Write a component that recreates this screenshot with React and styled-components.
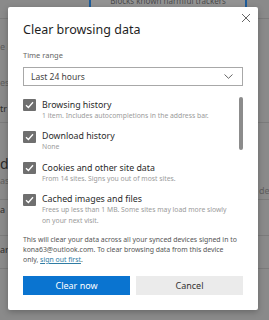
import React from "react";
import styled, { createGlobalStyle } from "styled-components";

const Global = createGlobalStyle`
  html, body { margin: 0; padding: 0; background: #8a8a8a; overflow: hidden; }
  * { box-sizing: border-box; }
`;

const FONT = `"Noto Sans", "Open Sans", sans-serif`;

const Page = styled.div`
  position: relative;
  width: 269px;
  height: 320px;
  overflow: hidden;
  background: #8a8a8a;
  font-family: ${FONT};
`;

const Backdrop = styled.div`
  display: flex;
  flex-direction: column;
`;

const TopBand = styled.div`
  height: 19px;
  border-bottom: 1px solid #7b7b7b;
  padding-left: 89px;
`;

const TrackerCard = styled.div`
  width: 158px;
  height: 7px;
  border-left: 2px solid #1d5c9a;
  border-right: 2px solid #1d5c9a;
  background: #939393;
  overflow: hidden;
  font-size: 8px;
  line-height: 8px;
  color: #4a4a4a;
  text-align: center;
  & > span { display: block; margin-top: -3px; }
`;

const BgSection = styled.div`
  height: ${(p) => p.$h}px;
  border-bottom: 1px solid #7b7b7b;
  display: flex;
  flex-direction: column;
`;

const BgText = styled.div`
  white-space: nowrap;
  font-size: ${(p) => (p.$big ? 14 : 9)}px;
  line-height: ${(p) => (p.$big ? 14 : 10)}px;
  color: ${(p) => (p.$muted ? "#5e5e5e" : "#2c2c2c")};
  margin-top: ${(p) => p.$mt || 0}px;
  margin-left: ${(p) => p.$ml || 0}px;
`;

const Dialog = styled.div`
  position: absolute;
  left: 8px;
  top: 7px;
  width: 250px;
  height: 303px;
  background: #ffffff;
  border-radius: 2px;
  box-shadow: 0 2px 6px rgba(0, 0, 0, 0.25);
  padding: 14px 15px 15px;
  display: flex;
  flex-direction: column;
`;

const Title = styled.h1`
  margin: 0;
  font-size: 12.5px;
  line-height: 17px;
  font-weight: 400;
  color: #1f1f1f;
`;

const CloseButton = styled.button`
  position: absolute;
  top: 6px;
  right: 7px;
  width: 10px;
  height: 10px;
  padding: 0;
  border: 0;
  background: transparent;
  display: flex;
  align-items: center;
  justify-content: center;
`;

const Label = styled.div`
  margin-top: 12px;
  font-size: 7.5px;
  line-height: 10px;
  color: #666;
`;

const Select = styled.div`
  margin-top: 7px;
  height: 19px;
  border: 1px solid #a8a8a8;
  display: flex;
  align-items: center;
  justify-content: space-between;
  padding: 0 9px 0 7px;
  font-size: 8.5px;
  color: #444;
`;

const List = styled.div`
  position: relative;
  margin-top: 10px;
  height: 132px;
  padding-top: 3px;
  overflow: hidden;
`;

const Thumb = styled.div`
  position: absolute;
  right: 0;
  top: 1px;
  width: 4px;
  height: 53px;
  border-radius: 2px;
  background: #8c8c8c;
`;

const Item = styled.div`
  display: flex;
  align-items: flex-start;
  gap: 6px;
  padding-bottom: 9.5px;
`;

const Box = styled.div`
  flex: none;
  width: 13px;
  height: 12px;
  border-radius: 1px;
  background: #6f6f6f;
  display: flex;
  align-items: center;
  justify-content: center;
`;

const ItemText = styled.div`
  display: flex;
  flex-direction: column;
`;

const ItemTitle = styled.div`
  font-size: 8.8px;
  line-height: 11px;
  color: #2a2a2a;
  margin-top: 0.5px;
`;

const ItemSub = styled.div`
  font-size: 6.8px;
  line-height: 10.5px;
  color: #9a9a9a;
  width: 192px;
`;

const Footer = styled.p`
  margin: 7px 0 0;
  font-size: 6.9px;
  line-height: 10px;
  color: #555;
`;

const Link = styled.a`
  color: #2f7ca3;
  text-decoration: underline;
`;

const Buttons = styled.div`
  margin-top: 11px;
  display: grid;
  grid-template-columns: 1fr 1fr;
  gap: 6px;
`;

const Button = styled.button`
  height: 19px;
  border: 0;
  border-radius: 0;
  font-family: ${FONT};
  font-size: 9px;
  padding: 0;
  background: ${(p) => (p.$primary ? "#0a74d0" : "#ebebeb")};
  color: ${(p) => (p.$primary ? "#ffffff" : "#333333")};
`;

const Check = () => (
  <svg width="9" height="8" viewBox="0 0 9 8">
    <path d="M1 4.2 L3.4 6.5 L8 1.3" fill="none" stroke="#fff" strokeWidth="1.3" />
  </svg>
);

const items = [
  ["Browsing history", "1 item. Includes autocompletions in the address bar."],
  ["Download history", "None"],
  ["Cookies and other site data", "From 14 sites. Signs you out of most sites."],
  ["Cached images and files", "Frees up less than 1 MB. Some sites may load more slowly on your next visit."],
];

export default function App() {
  return (
    <Page>
      <Global />
      <Backdrop>
        <TopBand>
          <TrackerCard>
            <span>Blocks known harmful trackers</span>
          </TrackerCard>
        </TopBand>
        <BgSection $h={104}>
          <BgText $muted $mt={23}>e b</BgText>
          <BgText $muted $mt={26}>es y</BgText>
          <BgText $mt={16}>tr</BgText>
        </BgSection>
        <BgSection $h={77}>
          <BgText $big $mt={34}>d</BgText>
          <BgText $muted $mt={5}>as</BgText>
          <BgText $muted $ml={259}>dele</BgText>
        </BgSection>
        <BgSection $h={36}>
          <BgText $mt={5}>a</BgText>
        </BgSection>
        <BgSection $h={33}>
          <BgText $mt={9}>ar</BgText>
        </BgSection>
      </Backdrop>

      <Dialog>
        <Title>Clear browsing data</Title>
        <CloseButton aria-label="Close">
          <svg width="10" height="10" viewBox="0 0 10 10">
            <path d="M1 1 L9 9 M9 1 L1 9" stroke="#555" strokeWidth="0.9" />
          </svg>
        </CloseButton>
        <Label>Time range</Label>
        <Select>
          <span>Last 24 hours</span>
          <svg width="9" height="5" viewBox="0 0 9 5">
            <path d="M0.5 0.5 L4.5 4.3 L8.5 0.5" fill="none" stroke="#555" strokeWidth="0.9" />
          </svg>
        </Select>
        <List>
          <Thumb />
          {items.map(([t, s]) => (
            <Item key={t}>
              <Box>
                <Check />
              </Box>
              <ItemText>
                <ItemTitle>{t}</ItemTitle>
                <ItemSub>{s}</ItemSub>
              </ItemText>
            </Item>
          ))}
        </List>
        <Footer>
          This will clear your data across all your synced devices signed in to kona63@outlook.com. To clear
          browsing data from this device
          <br />
          only, <Link href="#">sign out first</Link>.
        </Footer>
        <Buttons>
          <Button $primary>Clear now</Button>
          <Button>Cancel</Button>
        </Buttons>
      </Dialog>
    </Page>
  );
}
